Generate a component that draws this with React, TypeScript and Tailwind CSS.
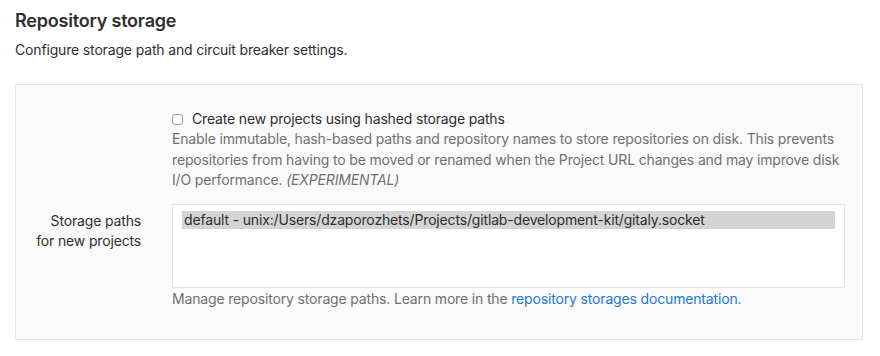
import React from "react";

export default function App() {
  return (
    <div className="w-[880px] h-[356px] bg-white px-[15px] text-[14px] tracking-[-0.16px] text-[#2e2e2e]" style={{ fontFamily: 'Inter, "Liberation Sans", Arial, sans-serif' }}>
      <h4 className="pt-[10px] text-[18px] font-semibold leading-[22px] tracking-[-0.2px] text-[#2e2e2e]">Repository storage</h4>
      <p className="mt-[8px] leading-[20px]">Configure storage path and circuit breaker settings.</p>
      <div className="mt-[24px] w-[848px] border border-[#e5e5e5] bg-[#fafafa] pt-[24px] pb-[30px]">
        <div className="flex">
          <div className="w-[156px] shrink-0" />
          <div className="flex-1 pr-[17px]">
            <label className="flex items-center leading-[20px]">
              <span className="mr-[9px] inline-block h-[11px] w-[11px] rounded-[3px] border border-[#9b9b9b] bg-white" />
              <span>Create new projects using hashed storage paths</span>
            </label>
            <p className="leading-[20.5px] text-[#707070]">
              Enable immutable, hash-based paths and repository names to store repositories on disk. This prevents repositories from having to be moved or renamed when the Project URL changes and may improve disk I/O performance. <em>(EXPERIMENTAL)</em>
            </p>
          </div>
        </div>
        <div className="mt-[13px] flex">
          <div className="w-[156px] shrink-0 pr-[31px] pt-[7px] text-right leading-[20px]">
            Storage paths
            <br />
            for new projects
          </div>
          <div className="flex-1 pr-[17px]">
            <div className="h-[84px] border border-[#e5e5e5] bg-white px-[9px] pt-[6px]">
              <div className="h-[18px] bg-[#d4d4d4] pl-[2px] leading-[18px] text-[#2e2e2e]">
                default - unix:/Users/dzaporozhets/Projects/gitlab-development-kit/gitaly.socket
              </div>
            </div>
            <p className="mt-[1px] leading-[20px] text-[#707070]">
              Manage repository storage paths. Learn more in the{" "}
              <a className="text-[#1f78d1]">repository storages documentation</a>.
            </p>
          </div>
        </div>
      </div>
    </div>
  );
}
